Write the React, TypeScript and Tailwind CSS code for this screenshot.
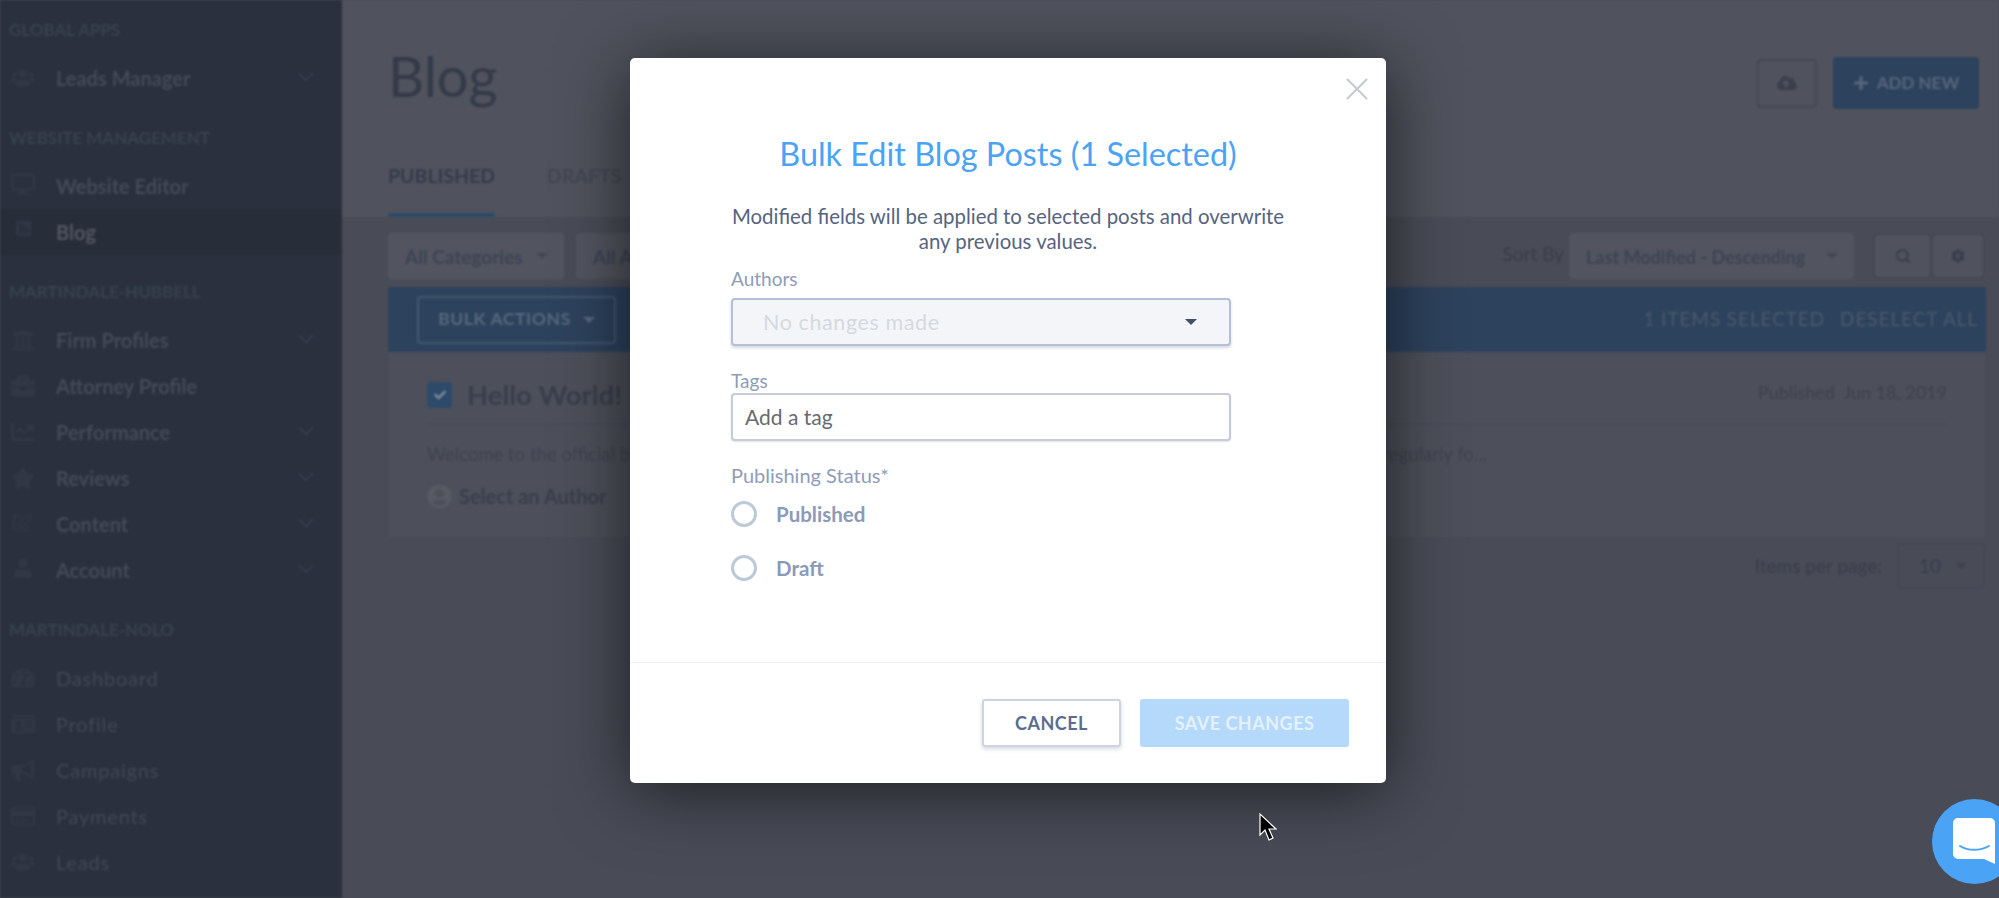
import { ChevronDown, Search, X } from "lucide-react";
import {
  FaBriefcase,
  FaBullhorn,
  FaChartLine,
  FaCheck,
  FaCloudUploadAlt,
  FaCog,
  FaDesktop,
  FaIdCard,
  FaPlus,
  FaRegCreditCard,
  FaRegEdit,
  FaRssSquare,
  FaStar,
  FaTachometerAlt,
  FaUniversity,
  FaUser,
  FaUserCircle,
  FaUsers,
} from "react-icons/fa";
import type { IconType } from "react-icons";

interface NavItem {
  label: string;
  icon: IconType;
  iconClass?: string;
  chevron?: boolean;
  active?: boolean;
  light?: boolean;
}

interface NavSection {
  title: string;
  items: NavItem[];
}

const sections: NavSection[] = [
  {
    title: "GLOBAL APPS",
    items: [{ label: "Leads Manager", icon: FaUsers, chevron: true }],
  },
  {
    title: "WEBSITE MANAGEMENT",
    items: [
      { label: "Website Editor", icon: FaDesktop, iconClass: "w-6 h-6 -mt-1" },
      { label: "Blog", icon: FaRssSquare, iconClass: "w-[17px] h-[17px] -mt-2", active: true },
    ],
  },
  {
    title: "MARTINDALE-HUBBELL",
    items: [
      { label: "Firm Profiles", icon: FaUniversity, chevron: true },
      { label: "Attorney Profile", icon: FaBriefcase },
      { label: "Performance", icon: FaChartLine, chevron: true },
      { label: "Reviews", icon: FaStar, chevron: true },
      { label: "Content", icon: FaRegEdit, iconClass: "w-5 h-5 -mt-1", chevron: true },
      { label: "Account", icon: FaUser, iconClass: "w-5 h-5 -mt-1", chevron: true },
    ],
  },
  {
    title: "MARTINDALE-NOLO",
    items: [
      { label: "Dashboard", icon: FaTachometerAlt, light: true },
      { label: "Profile", icon: FaIdCard, light: true },
      { label: "Campaigns", icon: FaBullhorn, light: true },
      { label: "Payments", icon: FaRegCreditCard, light: true },
      { label: "Leads", icon: FaUsers, light: true },
    ],
  },
];

function Caret({ className }: { className: string }) {
  return (
    <span
      className={`inline-block w-0 h-0 border-x-[6px] border-x-transparent border-t-[6px] ${className}`}
    />
  );
}

function Sidebar() {
  return (
    <aside className="w-[342px] shrink-0 h-full bg-[#2a303e] overflow-hidden">
      {sections.map((section) => (
        <div key={section.title} className="pt-[27px] first:pt-[20px]">
          <div className="h-5 mb-[15px] pl-[9px] text-[17px] leading-5 font-bold text-[#38424f]">
            {section.title}
          </div>
          {section.items.map((item) => {
            const Icon = item.icon;
            return (
              <div
                key={item.label}
                className={`h-[46px] flex items-center ${item.active ? "bg-[#282d3a]" : ""}`}
              >
                <div className="w-[56px] flex justify-center pr-[10px] text-[#313745]">
                  <Icon className={item.iconClass ?? "w-6 h-6"} />
                </div>
                <span
                  className={`text-[20px] flex-1 ${
                    item.light
                      ? "tracking-[0.8px] text-[#424856]"
                      : item.active
                        ? "font-bold text-[#51555f]"
                        : "font-bold text-[#444a57]"
                  }`}
                >
                  {item.label}
                </span>
                {item.chevron && (
                  <ChevronDown className="w-[26px] h-[26px] mr-[23px] -mt-[3px] text-[#3c4251]" strokeWidth={1.1} />
                )}
              </div>
            );
          })}
        </div>
      ))}
    </aside>
  );
}

function FilterSelect({ label, width, textClass }: { label: string; width: string; textClass: string }) {
  return (
    <div className={`${width} h-[46px] rounded bg-[#52555f] flex items-center justify-between pl-[17px] pr-[16px] font-bold text-[#3c4354] ${textClass}`}>
      <span className="pt-[2px]">{label}</span>
      <Caret className="border-t-[#434753]" />
    </div>
  );
}

function Main() {
  return (
    <main className="flex-1 h-full flex flex-col bg-[#494c57]">
      <header className="h-[217px] shrink-0 bg-[#50535d] pl-[46px] pr-[20px] pt-[57px] flex flex-col justify-between">
        <div className="flex items-center justify-between h-[52px]">
          <h1 className="text-[56px] leading-[52px] -mt-[14px] text-[#343a4a]">Blog</h1>
          <div className="flex items-center gap-4">
            <div className="w-[60px] h-[49px] rounded border-2 border-[#454853] flex items-center justify-center text-[#3b3f4b]">
              <FaCloudUploadAlt className="w-5 h-5" />
            </div>
            <div className="w-[146px] h-[52px] rounded bg-[#2d425c] flex items-center justify-center gap-2 text-[17px] font-bold text-[#55677d]">
              <FaPlus className="w-4 h-4" />
              ADD NEW
            </div>
          </div>
        </div>
        <nav className="flex gap-[52px] text-[19.5px] font-bold leading-8">
          <div className="pb-[21px] border-b-4 border-[#2d4a6b] text-[#343a4a] h-[57px]">PUBLISHED</div>
          <div className="text-[#434753]">DRAFTS</div>
        </nav>
      </header>

      <div className="pl-[46px] pr-[13px] pt-4 flex flex-col">
        <div className="flex items-center justify-between h-[46px] mb-2 pr-[3px]">
          <div className="flex gap-3">
            <FilterSelect label="All Categories" width="w-[176px]" textClass="text-[19px]" />
            <FilterSelect label="All Authors" width="w-[176px]" textClass="text-[19px]" />
          </div>
          <div className="flex items-center">
            <span className="text-[19px] text-[#393d49] mr-[5px] -mt-[3px]">Sort By</span>
            <FilterSelect label="Last Modified - Descending" width="w-[285px]" textClass="text-[18px]" />
            <div className="ml-[21px] flex gap-[3px] text-[#393e4b]">
              <div className="w-[55px] h-[42px] rounded bg-[#50535d] flex items-center justify-center shadow-[0_0_0_2px_#454853]">
                <Search className="w-4 h-4" strokeWidth={3} />
              </div>
              <div className="w-[50px] h-[42px] rounded bg-[#50535d] flex items-center justify-center shadow-[0_0_0_2px_#454853]">
                <FaCog className="w-[14px] h-[14px]" />
              </div>
            </div>
          </div>
        </div>

        <div className="h-[65px] bg-[#2d425c] flex items-center justify-between pl-[29px] pr-2">
          <div className="w-[199px] h-[48px] rounded border-2 border-[#425870] flex items-center justify-center gap-3 text-[17.5px] font-bold tracking-[0.6px] text-[#56697e]">
            BULK ACTIONS
            <Caret className="border-t-[#56697e]" />
          </div>
          <div className="flex gap-[15px] text-[19px] tracking-[0.9px] text-[#4a5a6e]">
            <span>1 ITEMS SELECTED</span>
            <span>DESELECT ALL</span>
          </div>
        </div>

        <section className="h-[185px] mx-px bg-[#4d505a] px-[38px] pt-[26px]">
          <div className="flex items-start justify-between h-[47px] border-b border-[#474a55]">
            <div className="flex items-center gap-[15px]">
              <div className="w-[25px] h-[26px] rounded bg-[#2d4a6b] flex items-center justify-center text-[#7f8c9d]">
                <FaCheck className="w-3 h-3" />
              </div>
              <span className="text-[27.5px] leading-[34px] font-bold text-[#393e4b]">Hello World!</span>
            </div>
            <span className="text-[18px] leading-[28px] text-[#3d414d]">Published&nbsp; Jun 18, 2019</span>
          </div>
          <p className="mt-[17px] text-[18.5px] leading-6 text-[#3f4350] whitespace-nowrap">
            Welcome to the official blog of our firm. We are delighted to share our news with our clients, so be sure to check back regularly fo...
          </p>
          <div className="mt-[15px] flex items-center gap-[7px] text-[20px] font-bold text-[#393e4b]">
            <FaUserCircle className="w-[25px] h-[25px] text-[#575a63]" />
            Select an Author
          </div>
        </section>

        <div className="flex justify-end items-center mt-[6px] gap-[15px] pr-px">
          <span className="text-[19px] text-[#393d49]">Items per page:</span>
          <div className="w-[88px] h-[46px] rounded border-2 border-[#464955] flex items-center justify-between pl-[20px] pr-[16px] text-[19px] text-[#363c4d]">
            10
            <Caret className="border-t-[#3f4350]" />
          </div>
        </div>
      </div>
    </main>
  );
}

function RadioRow({ label }: { label: string }) {
  return (
    <div className="flex items-center h-[26px]">
      <span className="w-[26px] h-[26px] rounded-full border-[3px] border-[#bccad7]" />
      <span className="ml-[19px] text-[20.5px] font-bold text-[#8b9ab8]">{label}</span>
    </div>
  );
}

function BulkEditModal() {
  return (
    <div className="absolute left-[630px] top-[58px] w-[756px] h-[725px] bg-white rounded-[5px] flex flex-col shadow-[0_8px_70px_rgba(0,0,0,0.6)]">
      <button className="absolute right-[10px] top-[12px] text-[#c6cbd1]">
        <X className="w-[38px] h-[38px]" strokeWidth={1.3} />
      </button>

      <div className="h-[604px] shrink-0 pt-[76px]">
        <h2 className="text-center text-[32.4px] leading-10 text-[#4aa3f5]">Bulk Edit Blog Posts (1 Selected)</h2>
        <p className="mt-[30px] text-center text-[20.4px] leading-[25px] text-[#566480]">
          Modified fields will be applied to selected posts and overwrite
          <br />
          any previous values.
        </p>

        <div className="ml-[101px] w-[500px]">
          <label className="block mt-[14px] h-[22px] text-[19px] leading-[22px] text-[#8e9cb9]">Authors</label>
          <div className="mt-2 h-[48px] rounded-[4px] border-[2.5px] border-[#b5c0d6] bg-[#f4f5f8] flex items-center justify-between pl-[30px] pr-[32px] shadow-[0_2px_3px_rgba(90,105,140,0.25)]">
            <span className="text-[21.5px] tracking-[0.6px] text-[#d5d9e0]">No changes made</span>
            <Caret className="border-t-[#3f5068]" />
          </div>

          <label className="block mt-[24px] h-[22px] text-[19px] leading-[22px] text-[#8e9cb9]">Tags</label>
          <div className="mt-px h-[48px] rounded-[4px] border-[2.5px] border-[#c5cbd9] bg-white flex items-center pl-3 text-[21px] text-[#666a70] shadow-[0_1px_2px_rgba(90,105,140,0.2)]">
            Add a tag
          </div>

          <label className="block mt-[23px] h-[22px] text-[20px] leading-[22px] text-[#8e9cb9]">Publishing Status*</label>
          <div className="mt-[15px] flex flex-col gap-[28px]">
            <RadioRow label="Published" />
            <RadioRow label="Draft" />
          </div>
        </div>
      </div>

      <div className="flex-1 border-t border-[#eef0f5] pt-[36px] pr-[37px] flex justify-end gap-[19px]">
        <button className="w-[139px] h-[48px] rounded-[3px] border-2 border-[#cdd3e0] text-[18px] font-bold tracking-[0.5px] text-[#5a6d90] shadow-[0_2px_4px_rgba(90,105,140,0.25)]">
          CANCEL
        </button>
        <button className="w-[209px] h-[48px] rounded-[3px] bg-[#b5d9fb] text-[18px] font-bold tracking-[0.5px] text-[#e4f1fd]">
          SAVE CHANGES
        </button>
      </div>
    </div>
  );
}

export default function App() {
  return (
    <div className="relative w-full h-[898px] overflow-hidden bg-[#494c57] font-[Lato,sans-serif]">
      <div className="flex h-full blur-[1px]">
        <Sidebar />
        <Main />
      </div>

      <BulkEditModal />

      {/* chat launcher */}
      <div className="absolute left-[1932px] top-[799px] w-[85px] h-[85px] rounded-full bg-[#4aa3f5]">
        <svg className="absolute left-[21px] top-[19px]" width="44" height="48" viewBox="0 0 44 48">
          <path d="M5 0h32a5 5 0 0 1 5 5v41l-11-5H5a5 5 0 0 1-5-5V5a5 5 0 0 1 5-5z" fill="#fff" />
          <path d="M7 28c8 5 20 5 29 0" fill="none" stroke="#4aa3f5" strokeWidth="2" strokeLinecap="round" />
        </svg>
      </div>

      {/* mouse cursor */}
      <svg className="absolute left-[1259px] top-[813px]" width="18" height="28" viewBox="0 0 18 28">
        <path d="M1 1v21l5-5 4 10 4-2-4-9h7z" fill="#000" stroke="#fff" strokeWidth="1.2" />
      </svg>
    </div>
  );
}
